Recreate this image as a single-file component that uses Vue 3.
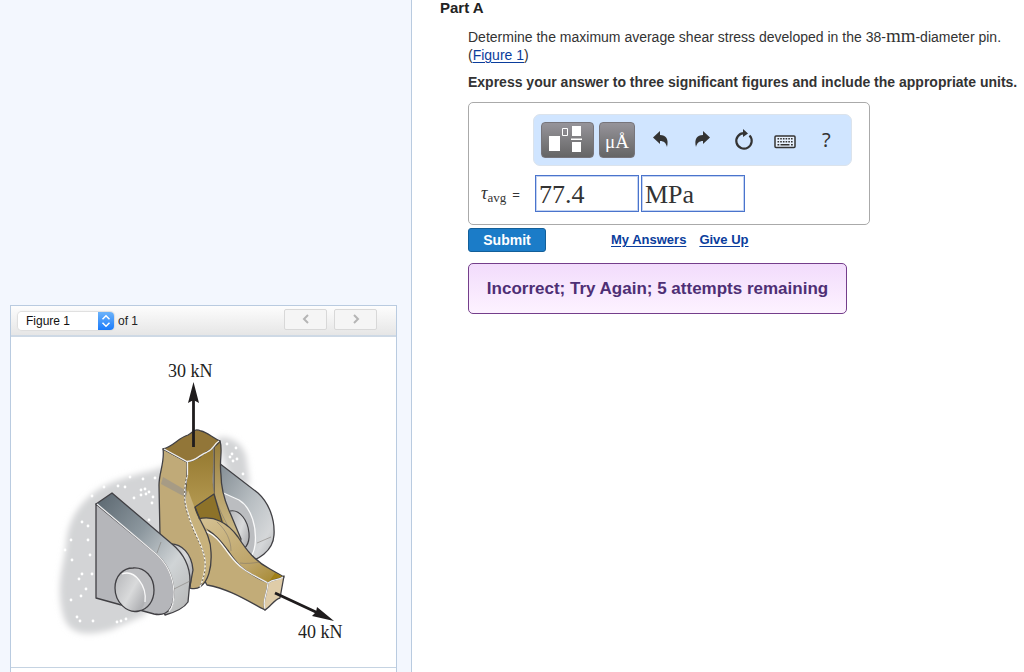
<script setup>
import { ref } from 'vue'

const figure = ref('Figure 1')
const value = ref('77.4')
const units = ref('MPa')

const specks = [
  [92, 496], [104, 487], [118, 486], [130, 477], [143, 479], [145, 489], [149, 492], [155, 478],
  [152, 503], [141, 490], [125, 487], [82, 522], [88, 526], [71, 540], [65, 550], [72, 560], [88, 540],
  [90, 555], [82, 574], [79, 579], [92, 574], [81, 596], [86, 589], [77, 617], [80, 621], [93, 621],
  [126, 619], [121, 621], [149, 520], [153, 497], [141, 495], [134, 498], [117, 622], [71, 600],
  [227, 444], [236, 448], [232, 454], [230, 457], [237, 459], [243, 474], [233, 461], [146, 494]
]
const keys = [0, 1, 2, 3, 4, 5]
</script>

<template>
  <div class="page">
    <aside class="sidebar">
      <section class="panel">
        <header class="panel-head">
          <div class="picker">
            <select id="figure" v-model="figure" aria-label="Figure">
              <option>Figure 1</option>
            </select>
            <svg class="stepper" viewBox="0 0 16 18" aria-hidden="true">
              <path d="M4.500 7.200 8 3.700l3.500 3.500M4.500 10.800l3.500 3.500 3.500-3.500" />
            </svg>
          </div>
          <label for="figure">of 1</label>
          <nav class="pager">
            <button type="button" aria-label="Previous figure">
              <svg viewBox="0 0 8 10"><path d="M6 1 2 5l4 4" /></svg>
            </button>
            <button type="button" aria-label="Next figure">
              <svg viewBox="0 0 8 10"><path d="M2 1l4 4-4 4" /></svg>
            </button>
          </nav>
        </header>
        <div class="figure">
          <svg class="drawing" viewBox="11 337 385 330" role="img" aria-label="Pin joint with 30 kN and 40 kN forces">
            <defs>
              <filter id="soft" x="-20%" y="-20%" width="140%" height="140%"><feGaussianBlur stdDeviation="3" /></filter>
              <linearGradient id="steel" x1="0" y1="0" x2="1" y2="1">
                <stop offset="0" stop-color="#59656e" /><stop offset=".4" stop-color="#8d989f" />
                <stop offset=".7" stop-color="#d0d4d6" /><stop offset="1" stop-color="#b4b4b4" />
              </linearGradient>
              <linearGradient id="steelBack" x1="0" y1="0" x2="1" y2="1">
                <stop offset="0" stop-color="#7f8990" /><stop offset=".5" stop-color="#b9bfc3" />
                <stop offset=".8" stop-color="#d5d7d9" /><stop offset="1" stop-color="#aeb0b2" />
              </linearGradient>
              <linearGradient id="pin" x1="0" y1="0" x2="1" y2=".7">
                <stop offset="0" stop-color="#b5b6b9" /><stop offset=".6" stop-color="#d9dadb" /><stop offset="1" stop-color="#b0b1b4" />
              </linearGradient>
              <linearGradient id="brass" x1="0" y1="0" x2="0" y2="1">
                <stop offset="0" stop-color="#94782f" /><stop offset=".45" stop-color="#b39850" /><stop offset="1" stop-color="#d2bf8c" />
              </linearGradient>
              <linearGradient id="strip" x1="0" y1="0" x2="0" y2="1">
                <stop offset="0" stop-color="#957b38" /><stop offset=".4" stop-color="#b7a066" /><stop offset="1" stop-color="#d6c69b" />
              </linearGradient>
              <linearGradient id="armTop" x1="0" y1="0" x2="1" y2="1">
                <stop offset="0" stop-color="#d5c294" /><stop offset=".65" stop-color="#bda469" /><stop offset="1" stop-color="#a18325" />
              </linearGradient>
            </defs>

            <g filter="url(#soft)" fill="#d3d4d6">
              <path d="M166 466C148 473 115 477 95 492 79 504 67 521 66 546 63 568 55 590 64 618 71 637 90 635 111 630L145 615 175 560Z" />
              <path d="M216 438C229 435 241 441 246 456L250 486 230 480Z" />
            </g>
            <g fill="#fff"><circle v-for="(s, i) in specks" :key="i" :cx="s[0]" :cy="s[1]" r="1.4" /></g>

            <!-- rear bracket -->
            <path class="edge" fill="url(#steelBack)" d="M219 463 258 493C269 503 275 519 274 535 273 552 257 560 246 563L232 562 216 490Z" />
            <path fill="#bbbdc0" d="M219 491 240 501C252 508 257 530 255 545 253 556 247 562 240 562L220 540Z" />
            <path class="shine" d="M219 491 239 500C252 508 257 528 255 545 254 553 251 558 247 560" />
            <path class="thin" fill="url(#pin)" d="M230 511C240 509 248 521 249 533 250 545 244 551 238 550" />
            <path class="seam" d="M257 543 271 537" />

            <!-- upper fork -->
            <path class="edge" fill="url(#strip)" d="M214 445 220 441C223 450 219 460 221 475 221 489 225 502 231 515L241 539 237 562 226 560 214 500Z" />
            <path fill="url(#brass)" d="M187 462C198 460 203 455 213 447 215 462 211 478 214 492 217 509 224 519 229 533L222 570 206 580 184 520Z" />
            <path class="seam" d="M213 447C215 462 211 478 214 492 218 512 229 524 236 545 238 554 236 560 234 562" />
            <path class="edge" fill="#8d7229" d="M195 507 214 494 223 525 208 532 201 522Z" />
            <path class="edge" fill="#c0aa78" d="M163 449C165 461 159 473 159 485L160 536C170 544 184 552 192 568L190 588C204 592 212 573 209 555 206 536 186 520 185 500 185 487 188 476 187 462Z" />
            <path fill="#9b968a" opacity=".72" d="M163 477 187 491V498L161 484Z" />
            <path class="edge" fill="#927638" d="M163 449C174 446 178 438 188 435 194 432 194 428 201 431 207 432 213 438 220 441 214 450 205 451 200 457 195 460 192 461 187 462Z" />
            <path class="shine" d="M164 449 187 461.500C197 461 200 454 207 452 213 450 214 444 219 441" />

            <!-- lower arm -->
            <path class="edge" fill="url(#armTop)" d="M198 519C214 515 228 523 238 537 247 551 255 561 270 569L284 577 268 584 244 572 218 545 203 530Z" />
            <path class="edge" fill="#c2ac78" d="M268 583 265 610C246 600 229 589 207 585 200 575 203 550 202 528 213 531 221 541 229 552 239 567 248 574 268 583Z" />
            <path fill="#c2ac78" d="M201 522 210 533 209 574 202 580 198 535Z" />
            <path class="shine" d="M204 531C214 533 221 543 229 554 240 569 249 573 268 583" />
            <path class="seam" d="M217 522C226 530 231 540 231 551M240 563C246 564 254 563 260 562" />
            <path fill="#a08018" d="M268 583 275 573 284 577 280 580Z" />
            <path class="edge" fill="#dfcca8" d="M268 583C274 578 278 581 284 576L280 598C275 599 270 607 265 610 262 600 267 596 268 583Z" />
            <path class="shine" d="M265 609C262 600 267 596 268 583 274 578 278 581 283 577" />
            <path fill="#c8b27c" d="M194 506C196 521 212 532 211 552 212 571 207 580 201 586 207 562 204 551 197 536 191 524 186 513 185 500L188 490Z" />
            <path class="edge" fill="none" d="M195 507C198 520 211 534 211 552 212 568 208 581 201 586" />
            <path class="shine" d="M187.500 462V475C184 487 183 500 188 513 191 528 203 544 205 560 206 571 203 580 200 587" />
            <path class="dash" d="M187 475C183 492 184 507 190 520 195 538 204 547 205 562 206 571 203 580 200 586" />

            <!-- front bracket -->
            <path class="edge" fill="url(#pin)" d="M168 544C182 542 192 555 193 570L190 586 174 579Z" />
            <path class="edge" fill="url(#steel)" d="M96 504 112 493 172 544C184 554 190 567 190 581L188 602C184 608 176 612 165 615L148 570Z" />
            <path class="edge" fill="#b5b6ba" d="M96 504 155 553C166 562 173 576 174 592 174 606 169 617 154 614L96 598Z" />
            <path class="shine" d="M97 504 155 553C167 563 173 577 174 592 174 602 172 608 169 611" />
            <path class="seam" d="M157 553 161 542M174 589 190 581" />
            <path fill="#bcbdc0" d="M133 568C145 567 154 577 154 590 154 601 148 609 139 611 127 614 115 602 115 588 115 576 123 568 133 568Z" />
            <path fill="url(#pin)" d="M122 573C135 569 146 584 145 600 144 608 141 611 136 611 125 612 115 601 115 588 115 581 118 576 122 573Z" />
            <path class="shine" d="M122 574C135 569 147 586 145 602" />
            <path class="edge" fill="none" d="M133 568C145 567 154 577 154 590 154 601 148 609 139 611 127 614 115 602 115 588 115 576 123 568 133 568Z" />
            <path class="arrow" d="M193.500 447V398M275 593 318 613" />
            <path fill="#1f1c1d" d="M193.500 382 199 403 193.500 400 188 403ZM334 621 312 616 316 612 317 607Z" />
            <text x="168" y="377">30 kN</text>
            <text x="298" y="638">40 kN</text>
          </svg>
        </div>
      </section>
    </aside>

    <main class="content">
      <h1>Part A</h1>
      <div class="problem">
        <p>
          Determine the maximum average shear stress developed in the 38-<span class="unit">mm</span>-diameter pin.<br>
          (<a href="#figure">Figure 1</a>)
        </p>
        <p class="instructions">Express your answer to three significant figures and include the appropriate units.</p>

        <form @submit.prevent>
          <div class="answer-box">
            <div class="toolbar">
              <button type="button" class="tool templates" aria-label="Templates">
                <svg viewBox="0 0 51 34">
                  <path fill="#fff" d="M7 13h11v15H7zM30 3h9v10h-9zM30 19h9v10h-9zM29 15.500h11v1.500H29z" />
                  <path fill="none" stroke="#fff" d="M20.500 5.500h5v7h-5z" />
                </svg>
              </button>
              <button type="button" class="tool symbols">μÅ</button>
              <div class="icons">
                <button type="button" class="icon" aria-label="Undo">
                  <svg viewBox="0 0 22 22"><path fill="#333" d="M3 8.500 10 2v4c6 0 9 4 7 12-1-4-3-6-7-6v3Z" /></svg>
                </button>
                <button type="button" class="icon" aria-label="Redo">
                  <svg viewBox="0 0 22 22"><path fill="#333" d="M19 8.500 12 2v4C6 6 3 10 5 18c1-4 3-6 7-6v3Z" /></svg>
                </button>
                <button type="button" class="icon" aria-label="Reset">
                  <svg viewBox="0 0 22 22">
                    <path fill="none" stroke="#333" stroke-width="2.200" d="M16.500 6.500A7.700 7.700 0 1 1 11 4.200" />
                    <path fill="#333" d="M10 0 15 4.500 10 8Z" />
                  </svg>
                </button>
                <button type="button" class="icon" aria-label="Keyboard">
                  <svg viewBox="0 0 22 22">
                    <rect x="1" y="7" width="20" height="11.500" rx="1" fill="#e8f2ff" stroke="#333" stroke-width="1.500" />
                    <g fill="#333">
                      <rect v-for="k in keys" :key="k" :x="3.500 + k * 2.700" y="9" width="1.600" height="1.500" />
                      <rect v-for="k in keys" :key="'b' + k" :x="3.500 + k * 2.700" y="12" width="1.600" height="1.500" />
                      <path d="M3.500 15h1.800v1.500H3.500zM6.500 15h9v1.500h-9zM17 15h1.800v1.500H17z" />
                    </g>
                  </svg>
                </button>
                <button type="button" class="icon help" aria-label="Help">?</button>
              </div>
            </div>
            <div class="entry">
              <label for="value"><i>τ</i><sub>avg</sub><span>=</span></label>
              <input id="value" v-model="value" type="text">
              <input v-model="units" type="text" aria-label="Units">
            </div>
          </div>
          <div class="actions">
            <button type="submit" class="submit">Submit</button>
            <a href="#answers">My Answers</a>
            <a href="#give-up">Give Up</a>
          </div>
        </form>
        <div class="feedback" role="status">Incorrect; Try Again; 5 attempts remaining</div>
      </div>
    </main>
  </div>
</template>

<style>
body {
  margin: 0;
  background: #fff;
}
</style>

<style scoped>
.page {
  display: grid;
  grid-template-columns: minmax(0, 412px) minmax(0, 1fr);
  min-height: 100vh;
  font-family: "Liberation Sans", Arial, sans-serif;
  font-size: 14px;
  line-height: 18px;
  color: #333;
}
button, input, select { box-sizing: border-box; margin: 0; padding: 0; font-family: inherit; }
.sidebar {
  display: flex;
  box-sizing: border-box;
  padding: 305px 14px 0 10px;
  border-right: 1px solid #b9cbe0;
  background: #f3f7fe;
}
.panel { flex: 1; border: 1px solid #b9cbe0; border-bottom: 0; background: #fff; }
.panel-head {
  display: flex;
  align-items: center;
  box-sizing: border-box;
  height: 31px;
  padding: 0 19px 0 7px;
  border-bottom: 2px solid #ced9e5;
  background: linear-gradient(#fdfdfd, #e6e6e6);
  font-size: 12px;
  color: #222;
}
.picker { display: flex; margin-right: 4px; border-radius: 4px; box-shadow: 0 0 1px 1px #ddd; overflow: hidden; }
.picker select {
  width: 80px;
  height: 18px;
  padding-left: 8px;
  appearance: none;
  border: 0;
  border-radius: 0;
  background: #fff;
  font-size: 12px;
  color: #111;
}
.stepper { width: 16px; height: 18px; background: linear-gradient(#6cb3fa, #1a7bfb); fill: none; stroke: #fff; stroke-width: 1.5; }
.pager { display: flex; gap: 7px; margin-left: auto; }
.pager button {
  display: grid;
  place-items: center;
  width: 43px;
  height: 21px;
  margin-bottom: 3px;
  border: 1px solid #d8d8d8;
  border-radius: 2px;
  background: #f5f5f5;
}
.pager svg { width: 8px; height: 10px; fill: none; stroke: #b5b5b5; stroke-width: 2; }
.figure { border-bottom: 1px solid #c5d3e2; }
.drawing { display: block; width: 100%; }
.drawing text { font-family: "Liberation Serif", serif; font-size: 18px; fill: #222; }
.edge { stroke: #414044; stroke-width: 1.3; stroke-linejoin: round; }
.thin { stroke: #414044; stroke-width: 1.2; }
.seam { fill: none; stroke: #77716a; stroke-width: .7; opacity: .7; }
.shine { fill: none; stroke: #fff; stroke-width: 1.3; opacity: .9; }
.dash { fill: none; stroke: #6b6353; stroke-width: 1; stroke-dasharray: 2 2; }
.arrow { fill: none; stroke: #1f1c1d; stroke-width: 2.8; }

.content { padding: 0 0 0 28px; }
h1 { margin: 0; font-size: 15px; line-height: 16px; color: #222; }
.problem { padding: 12px 0 0 28px; white-space: nowrap; }
p { margin: 0 0 9px; }
.instructions { margin-bottom: 11px; font-weight: bold; }
.unit { font-family: "Liberation Serif", serif; font-size: 19px; line-height: 14px; }
a { color: #0a3d9c; text-underline-offset: 2px; }
.answer-box {
  box-sizing: border-box;
  width: 402px;
  max-width: 100%;
  padding: 11px 17px 12px 12px;
  border: 1px solid #aaa;
  border-radius: 5px;
}
.toolbar {
  display: flex;
  align-items: center;
  gap: 5px;
  box-sizing: border-box;
  height: 52px;
  margin-left: 52px;
  padding: 0 4px 0 7px;
  border: 1px solid #dbe3ec;
  border-radius: 7px;
  background: #d0e5ff;
}
.tool {
  height: 36px;
  border: 1px solid #77757b;
  border-radius: 4px;
  background: linear-gradient(#96949a, #656565);
  color: #fff;
}
.templates { width: 53px; }
.templates svg { display: block; width: 51px; height: 34px; }
.symbols { width: 36px; padding-top: 4px; font-family: "Liberation Serif", serif; font-size: 19px; }
.icons { display: flex; flex: 1; }
.icon { display: grid; flex: 1; place-items: center; height: 36px; border: 0; background: none; color: #333; }
.icon svg { width: 22px; height: 22px; }
.help { font-family: "Noto Sans", sans-serif; font-size: 20px; line-height: 24px; }
.entry { display: flex; align-items: center; gap: 2px; margin-top: 9px; }
.entry label { box-sizing: border-box; width: 52px; font-family: "Liberation Serif", serif; font-size: 18px; }
.entry sub { font-size: 13px; line-height: 1; vertical-align: -3px; }
.entry label span { margin-left: 6px; font-family: "Liberation Sans", sans-serif; font-size: 13px; }
.entry input {
  width: 104px;
  height: 37px;
  padding: 2px 3px 0;
  border: 1px solid #4a74cc;
  border-radius: 0;
  box-shadow: inset 0 0 0 1px #c3d3f2;
  background: #fff;
  font-family: "Liberation Serif", serif;
  font-size: 26px;
  color: #333;
}
.actions { display: flex; align-items: center; margin-top: 3px; font-weight: bold; font-size: 13px; }
.submit {
  width: 78px;
  height: 24px;
  margin-right: 65px;
  border: 1px solid #135f99;
  border-radius: 3px;
  background: #1b7cc8;
  color: #fff;
  font-size: 14px;
  font-weight: bold;
}
.actions a + a { margin-left: 13px; }
.feedback {
  display: inline-block;
  box-sizing: border-box;
  min-width: 379px;
  margin-top: 11px;
  padding: 15px 14px;
  border: 1px solid #743e8b;
  border-radius: 5px;
  background: linear-gradient(#f2dcfc, #fdf2ff);
  font-size: 17px;
  font-weight: bold;
  line-height: 19px;
  text-align: center;
  color: #4e2f75;
}
</style>
